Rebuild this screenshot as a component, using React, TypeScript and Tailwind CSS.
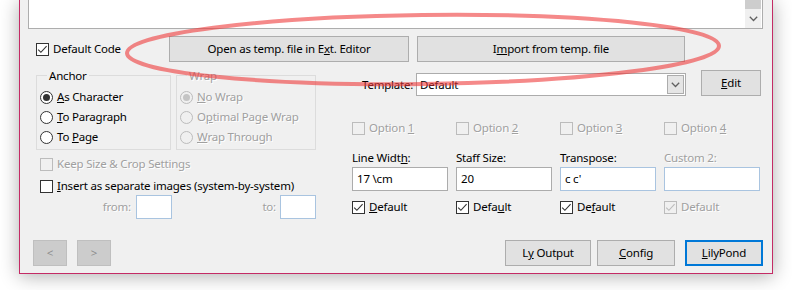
import React from "react";

const dis = "text-[#a0a0a0] [text-shadow:1px_1px_0_#ffffff]";

function Check({ checked = false, disabled = false }: { checked?: boolean; disabled?: boolean }) {
  return (
    <span
      className={`inline-flex w-[13px] h-[13px] shrink-0 items-center justify-center border ${
        disabled ? "border-[#bcbcbc] bg-[#f0f0f0]" : "border-[#333333] bg-white"
      }`}
    >
      {checked && (
        <svg width="11" height="11" viewBox="0 0 11 11">
          <polyline
            points="1.2,5.6 3.9,8.3 9.6,2.2"
            fill="none"
            stroke={disabled ? "#bcbcbc" : "#333333"}
            strokeWidth="1.1"
          />
        </svg>
      )}
    </span>
  );
}

function Radio({ checked = false, disabled = false }: { checked?: boolean; disabled?: boolean }) {
  return (
    <span
      className={`inline-flex w-[13px] h-[13px] shrink-0 items-center justify-center rounded-full border ${
        disabled ? "border-[#bcbcbc] bg-[#f0f0f0]" : "border-[#333333] bg-white"
      }`}
    >
      {checked && (
        <span className={`w-[7px] h-[7px] rounded-full ${disabled ? "bg-[#c4c4c4]" : "bg-[#333333]"}`} />
      )}
    </span>
  );
}

function Btn({ className = "", children, disabled = false }: { className?: string; children: React.ReactNode; disabled?: boolean }) {
  return (
    <div
      className={`h-[26px] flex items-center justify-center border ${
        disabled ? "bg-[#cccccc] border-[#bfbfbf] text-[#8c8c8c]" : "bg-[#e1e1e1] border-[#adadad]"
      } ${className}`}
    >
      {children}
    </div>
  );
}

function Chevron({ color = "#606060" }: { color?: string }) {
  return (
    <svg width="9" height="6" viewBox="0 0 9 6">
      <polyline points="0.8,0.8 4.5,4.5 8.2,0.8" fill="none" stroke={color} strokeWidth="1.3" />
    </svg>
  );
}

export default function App() {
  return (
    <div className="relative w-[792px] h-[290px] overflow-hidden bg-white font-['Noto_Sans',sans-serif] text-[11.5px] tracking-[-0.2px] text-black leading-[16px]">
      <div className="ml-[19px] w-[754px] h-[274px] bg-[#f0f0f0] border-x border-b border-[#c42b65] shadow-[0_2px_18px_rgba(0,0,0,0.32)] flex flex-col">
        {/* text area */}
        <div className="ml-[8px] w-[735px] h-[29px] shrink-0 bg-white border-x border-b border-[#adadad] flex justify-end">
          <div className="w-[16px] mr-[1px] h-[28px] bg-[#f0f0f0] flex flex-col">
            <div className="h-[9px] bg-[#cdcdcd]" />
            <div className="flex-1 flex items-center justify-center">
              <Chevron />
            </div>
          </div>
        </div>

        {/* row B */}
        <div className="mt-[7px] ml-[16px] h-[26px] flex items-center">
          <div className="w-[133px] flex items-center gap-[4px]">
            <Check checked />
            <span>Default Code</span>
          </div>
          <Btn className="w-[240px]">
            <span>
              Open as temp. file in E<span className="underline">x</span>t. Editor
            </span>
          </Btn>
          <Btn className="ml-[8px] w-[268px]">
            <span>
              I<span className="underline">m</span>port from temp. file
            </span>
          </Btn>
        </div>

        {/* section C */}
        <div className="mt-[5px] ml-[16px] flex">
          {/* left column */}
          <div className="w-[280px] flex flex-col">
            <div className="flex gap-[5px]">
              <fieldset className="w-[135px] border border-[#dcdcdc] pl-[3px] pt-[3px] pb-[2px]">
                <legend className="ml-[7px] px-[2px] leading-[17px]">Anchor</legend>
                <div className="h-[20px] flex items-center gap-[4px]">
                  <Radio checked />
                  <span>
                    <span className="underline">A</span>s Character
                  </span>
                </div>
                <div className="h-[20px] flex items-center gap-[4px]">
                  <Radio />
                  <span>
                    <span className="underline">T</span>o Paragraph
                  </span>
                </div>
                <div className="h-[20px] flex items-center gap-[4px]">
                  <Radio />
                  <span>
                    To <span className="underline">P</span>age
                  </span>
                </div>
              </fieldset>
              <fieldset className="w-[140px] border border-[#dcdcdc] pl-[3px] pt-[3px] pb-[2px]">
                <legend className={`ml-[7px] px-[2px] leading-[17px] ${dis}`}>Wrap</legend>
                <div className="h-[20px] flex items-center gap-[4px]">
                  <Radio checked disabled />
                  <span className={dis}>
                    <span className="underline">N</span>o Wrap
                  </span>
                </div>
                <div className="h-[20px] flex items-center gap-[4px]">
                  <Radio disabled />
                  <span className={dis}>
                    O<span className="underline">p</span>timal Page Wrap
                  </span>
                </div>
                <div className="h-[20px] flex items-center gap-[4px]">
                  <Radio disabled />
                  <span className={dis}>
                    <span className="underline">W</span>rap Through
                  </span>
                </div>
              </fieldset>
            </div>
            <div className="mt-[4px] h-[20px] pl-[4px] flex items-center gap-[4px]">
              <Check disabled />
              <span className={dis}>Keep Size &amp; Crop Settings</span>
            </div>
            <div className="mt-[3px] h-[18px] pl-[4px] flex items-center gap-[4px]">
              <Check />
              <span>
                <span className="underline">I</span>nsert as separate images (system-by-system)
              </span>
            </div>
            <div className="h-[24px] flex items-center">
              <span className={`w-[95px] text-right ${dis}`}>from:</span>
              <div className="ml-[5px] w-[36px] h-[24px] bg-white border border-[#a9c4e0]" />
              <span className={`w-[104px] text-right ${dis}`}>to:</span>
              <div className="ml-[4px] w-[36px] h-[24px] bg-white border border-[#a9c4e0]" />
            </div>
          </div>

          {/* right column */}
          <div className="ml-[36px] w-[410px] flex flex-col">
            <div className="mt-[3px] h-[26px] flex items-end">
              <span className="ml-[10px] w-[54px] h-[23px] flex items-center">Template:</span>
              <div className="w-[270px] h-[23px] bg-white border border-[#acacac] flex items-center pl-[3px]">
                <span>Default</span>
                <div className="ml-auto mr-[1px] w-[17px] h-[19px] bg-[#e5e5e5] border border-[#acacac] flex items-center justify-center">
                  <Chevron />
                </div>
              </div>
              <Btn className="ml-[15px] w-[60px]">
                <span>
                  <span className="underline">E</span>dit
                </span>
              </Btn>
            </div>

            <div className="mt-[22px] h-[20px] grid grid-cols-[96px_96px_96px_96px] gap-x-[8px]">
              {["1", "2", "3", "4"].map((n) => (
                <div key={n} className="flex items-center gap-[4px]">
                  <Check disabled />
                  <span className={dis}>
                    Option <span className="underline">{n}</span>
                  </span>
                </div>
              ))}
            </div>

            <div className="mt-[12px] h-[16px] grid grid-cols-[96px_96px_96px_96px] gap-x-[8px] items-center">
              <span>
                Line Widt<span className="underline">h</span>:
              </span>
              <span>Staff Size:</span>
              <span>Transpose:</span>
              <span className={dis}>Custom 2:</span>
            </div>

            <div className="mt-[1px] h-[24px] grid grid-cols-[96px_96px_96px_96px] gap-x-[8px]">
              <div className="h-[24px] bg-white border border-[#acacac] flex items-center pl-[4px]">17 \cm</div>
              <div className="h-[24px] bg-white border border-[#acacac] flex items-center pl-[4px]">20</div>
              <div className="h-[24px] bg-white border border-[#a9c4e0] flex items-center pl-[4px]">c c'</div>
              <div className="h-[24px] bg-white border border-[#a9c4e0]" />
            </div>

            <div className="mt-[6px] h-[20px] grid grid-cols-[96px_96px_96px_96px] gap-x-[8px]">
              <div className="flex items-center gap-[4px]">
                <Check checked />
                <span>
                  <span className="underline">D</span>efault
                </span>
              </div>
              <div className="flex items-center gap-[4px]">
                <Check checked />
                <span>
                  Defa<span className="underline">u</span>lt
                </span>
              </div>
              <div className="flex items-center gap-[4px]">
                <Check checked />
                <span>
                  De<span className="underline">f</span>ault
                </span>
              </div>
              <div className="flex items-center gap-[4px]">
                <Check checked disabled />
                <span className={dis}>Default</span>
              </div>
            </div>
          </div>
        </div>

        {/* bottom row */}
        <div className="mt-[21px] ml-[13px] mr-[9px] h-[26px] flex items-center">
          <Btn disabled className="w-[34px]">
            <span>&lt;</span>
          </Btn>
          <Btn disabled className="ml-[10px] w-[34px]">
            <span>&gt;</span>
          </Btn>
          <Btn className="ml-auto w-[86px]">
            <span>
              L<span className="underline">y</span> Output
            </span>
          </Btn>
          <Btn className="ml-[6px] w-[78px]">
            <span>
              <span className="underline">C</span>onfig
            </span>
          </Btn>
          <div className="ml-[10px] w-[78px] h-[26px] bg-[#e1e1e1] border-2 border-[#0078d7] flex items-center justify-center">
            <span>
              <span className="underline">L</span>ilyPond
            </span>
          </div>
        </div>
      </div>

      {/* annotation ellipse */}
      <svg className="absolute left-0 top-0 pointer-events-none" width="792" height="290" viewBox="0 0 792 290">
        <ellipse
          cx="423"
          cy="49.5"
          rx="296"
          ry="34.5"
          transform="rotate(-0.7 423 49.5)"
          fill="none"
          stroke="#ee3b3b"
          strokeOpacity="0.6"
          strokeWidth="4"
        />
      </svg>
    </div>
  );
}
